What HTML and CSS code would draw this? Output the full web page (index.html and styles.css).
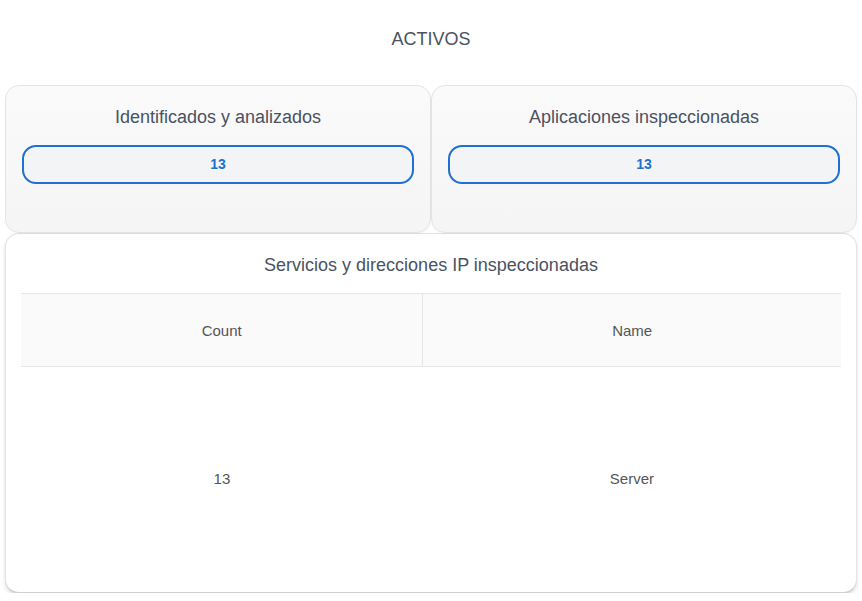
FILE: index.html
```html
<!DOCTYPE html>
<html lang="es">
<head>
<meta charset="utf-8">
<title>Activos</title>
<link rel="stylesheet" href="styles.css">
</head>
<body>
<div class="page">
  <h1 class="page-title">ACTIVOS</h1>
  <div class="stat-row">
    <section class="stat-card">
      <h2 class="card-title">Identificados y analizados</h2>
      <div class="pill">13</div>
    </section>
    <section class="stat-card">
      <h2 class="card-title">Aplicaciones inspeccionadas</h2>
      <div class="pill">13</div>
    </section>
  </div>
  <section class="table-card">
    <h2 class="card-title table-title">Servicios y direcciones IP inspeccionadas</h2>
    <table class="data-table">
      <thead>
        <tr><th class="col-count">Count</th><th>Name</th></tr>
      </thead>
      <tbody>
        <tr><td>13</td><td>Server</td></tr>
      </tbody>
    </table>
  </section>
</div>
</body>
</html>
```
FILE: styles.css
```css
* { box-sizing: border-box; }
html, body { margin: 0; padding: 0; background: #fff; }
body {
  font-family: "Liberation Sans", Arial, sans-serif;
  color: #4a5060;
}
.page {
  padding: 0 5px;
}
.page-title {
  margin: 0;
  height: 85px;
  padding-top: 29px;
  font-size: 18px;
  font-weight: normal;
  line-height: 20px;
  text-align: center;
  color: #4b5262;
}
.stat-row {
  display: flex;
}
.stat-card {
  flex: 1 1 0;
  height: 148px;
  border: 1px solid #e3e4e6;
  border-radius: 14px;
  background: linear-gradient(#fafafa, #f5f5f6);
  box-shadow: 0 1px 2px rgba(0,0,0,0.04);
  padding: 19px 16px 0;
}
.card-title {
  margin: 0;
  font-size: 18px;
  font-weight: normal;
  line-height: 24px;
  text-align: center;
  color: #4a5262;
}
.pill {
  margin-top: 16px;
  height: 39px;
  border: 2px solid #1f70d0;
  border-radius: 14px;
  background: #f3f4f5;
  color: #1f6fcf;
  font-weight: bold;
  font-size: 14px;
  line-height: 35px;
  text-align: center;
}
.table-card {
  height: 360px;
  border: 1px solid #e3e4e6;
  border-bottom-color: #cfd0d2;
  border-radius: 14px;
  background: #fff;
  box-shadow: 0 3px 4px rgba(0,0,0,0.12), 0 1px 1px rgba(0,0,0,0.08);
  padding: 19px 15px 0;
}
.table-title {
  margin-bottom: 16px;
}
.data-table {
  width: 100%;
  border-collapse: collapse;
  font-size: 15px;
  color: #555;
}
.data-table th {
  font-weight: normal;
  height: 73px;
  background: #fafafa;
  border-top: 1px solid #e6e6e6;
  border-bottom: 1px solid #e6e6e6;
  text-align: center;
}
.data-table th.col-count {
  width: 49%;
  border-right: 1px solid #e6e6e6;
}
.data-table td {
  height: 224px;
  text-align: center;
  color: #555;
}
```
